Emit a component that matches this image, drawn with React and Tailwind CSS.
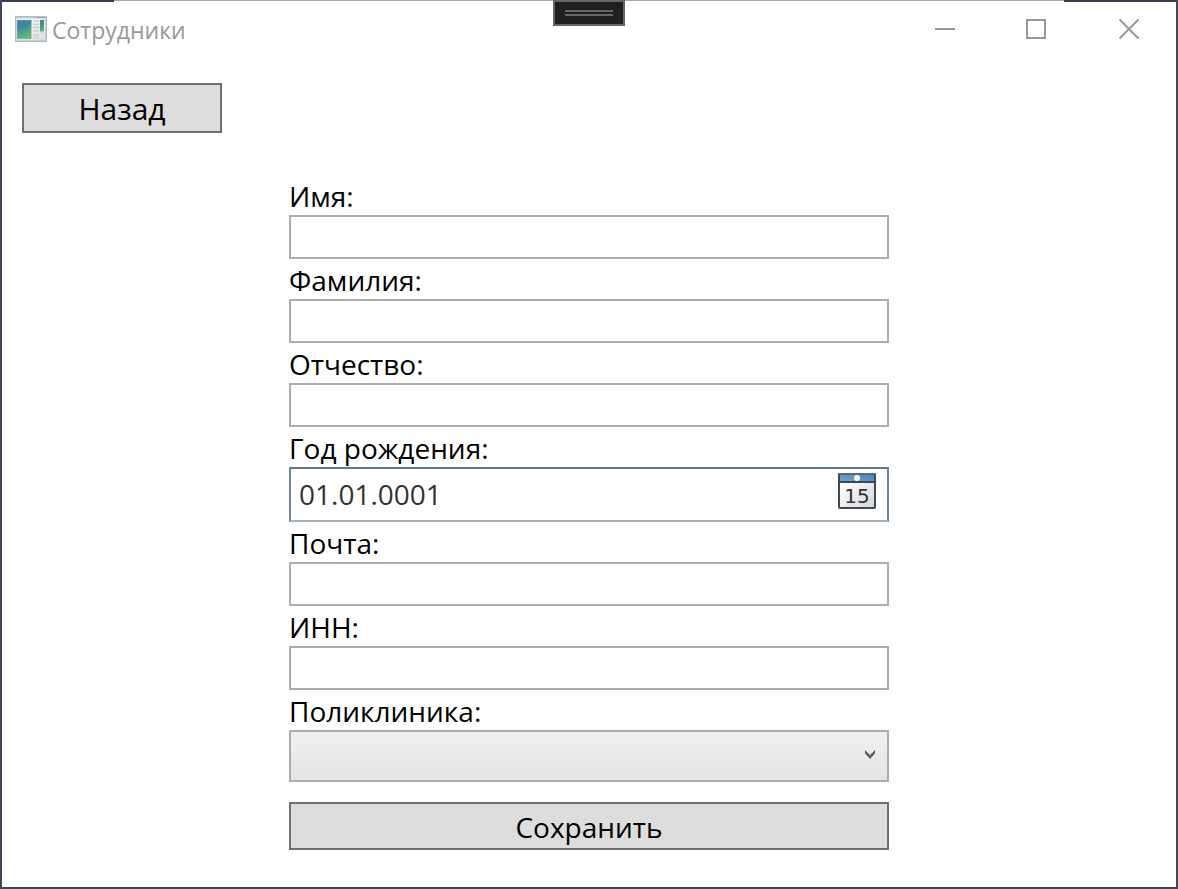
import React from "react";

function AppIcon() {
  return (
    <svg className="h-[26px] w-8 shrink-0" viewBox="0 0 32 26" aria-hidden="true">
      <defs>
        <linearGradient id="pane" x1="0" y1="0" x2="0.3" y2="1">
          <stop offset="0" stopColor="#4384ac" />
          <stop offset="0.45" stopColor="#3f8f98" />
          <stop offset="1" stopColor="#62b878" />
        </linearGradient>
        <linearGradient id="frame" x1="0" y1="0" x2="1" y2="1">
          <stop offset="0" stopColor="#fbfcfd" />
          <stop offset="1" stopColor="#dcdee1" />
        </linearGradient>
      </defs>
      <rect x="0.75" y="0.75" width="30.5" height="24.5" fill="url(#frame)" stroke="#b3b8bd" strokeWidth="1.5" />
      <path d="M1 1.5H31" stroke="#b9c4cf" strokeWidth="1.5" />
      <path d="M21 1.5H30" stroke="#98a5b3" strokeWidth="1" />
      <rect x="2" y="4" width="14.5" height="19" fill="url(#pane)" stroke="#b9d3dc" strokeWidth="0.5" />
      <path d="M2 15Q6 9 16.5 8V4H2Z" fill="#3b7fae" opacity="0.3" />
      <path d="M18 5H24M18 8.5H24M18 11.5H24M18 15H24M18 19H24M18 22H24" stroke="#cdd0d3" strokeWidth="1.5" />
      <rect x="25" y="4" width="4" height="11.5" fill="url(#pane)" />
      <path d="M25 17H29" stroke="#d3d6d8" />
    </svg>
  );
}

function CalendarIcon() {
  return (
    <svg className="h-9 w-[38px]" viewBox="0 0 38 36" aria-hidden="true">
      <defs>
        <linearGradient id="sheet" x1="0" y1="0" x2="1" y2="1">
          <stop offset="0.2" stopColor="#ffffff" />
          <stop offset="1" stopColor="#cfd4da" />
        </linearGradient>
        <linearGradient id="header" x1="0" y1="1" x2="1" y2="0">
          <stop offset="0" stopColor="#70abdb" />
          <stop offset="1" stopColor="#3f83bf" />
        </linearGradient>
      </defs>
      <rect x="1" y="1" width="36" height="34" rx="1" fill="url(#sheet)" stroke="#45474b" strokeWidth="2" />
      <rect x="2" y="1.5" width="34" height="7" fill="url(#header)" />
      <path d="M0 0.75H38" stroke="#6b6562" strokeWidth="1.5" />
      <path d="M1 9H37" stroke="#45474b" strokeWidth="2" />
      <circle cx="19" cy="5" r="3" fill="#fff" />
      <text x="19" y="30" textAnchor="middle" fontFamily="'DejaVu Sans', sans-serif" fontSize="20" fill="#303236">
        15
      </text>
    </svg>
  );
}

function Field({ id, label, children }) {
  return (
    <div>
      <label htmlFor={id} className="block h-10 pt-[3px] text-[28px] leading-9">
        {label}
      </label>
      {children || (
        <input id={id} type="text" className="block h-11 w-full border-2 border-[#abadb3] bg-white px-2 text-[28px] outline-none" />
      )}
    </div>
  );
}

function TitleBar() {
  return (
    <header className="flex h-[54px] items-center text-[#999999]">
      <div className="flex flex-1 items-center gap-1 pl-[13px]">
        <AppIcon />
        <h1 className="pl-px pt-0.5 text-[23px] leading-8">Сотрудники</h1>
      </div>
      <button type="button" aria-label="Свернуть" className="flex h-full w-[92px] items-center justify-center">
        <svg className="size-[22px]" viewBox="0 0 22 22">
          <path d="M2 11H22" stroke="currentColor" strokeWidth="2" />
        </svg>
      </button>
      <button type="button" aria-label="Развернуть" className="flex h-full w-[92px] items-center justify-center">
        <svg className="size-[22px]" viewBox="0 0 22 22">
          <rect x="2" y="2" width="18" height="18" fill="none" stroke="currentColor" strokeWidth="2" />
        </svg>
      </button>
      <button type="button" aria-label="Закрыть" className="flex h-full w-[94px] items-center justify-center">
        <svg className="size-[22px]" viewBox="0 0 22 22">
          <path d="M1.5 1.5L20.5 20.5M20.5 1.5L1.5 20.5" stroke="currentColor" strokeWidth="2" />
        </svg>
      </button>
    </header>
  );
}

export default function App() {
  return (
    <div className="relative flex min-h-screen flex-col border-2 border-t-0 border-[#3d465b] bg-white font-['Open_Sans','Noto_Sans',sans-serif] text-black">
      <div className="flex h-0.5 items-start">
        <div className="h-0.5 w-28 bg-[#373e51]" />
        <div className="h-px flex-1 bg-[#a9a9a9]" />
        <div className="h-0.5 w-28 bg-[#373e51]" />
      </div>
      <button
        type="button"
        aria-label="Панель отладки"
        className="absolute left-1/2 top-0 flex h-[26px] w-[72px] -translate-x-1/2 flex-col items-center justify-center gap-0.5 border-2 border-[#666666] bg-[#1f1f1f]"
      >
        <span className="h-0.5 w-12 bg-[#666666]" />
        <span className="h-0.5 w-12 bg-[#666666]" />
      </button>
      <TitleBar />
      <main className="flex flex-col px-5 pb-9 pt-[27px]">
        <button type="button" className="h-[50px] w-[200px] border-2 border-[#707070] bg-[#dddddd] pt-0.5 text-[30px] leading-9">
          Назад
        </button>
        <form className="mx-auto mt-[42px] w-full max-w-[600px]" onSubmit={(e) => e.preventDefault()}>
          <Field id="first-name" label="Имя:" />
          <Field id="last-name" label="Фамилия:" />
          <Field id="patronymic" label="Отчество:" />
          <Field id="birth" label="Год рождения:">
            <div className="flex h-[55px] items-center border-2 border-b-[#a5b1bc] border-l-[#73879a] border-r-[#73879a] border-t-[#65788b] pr-[11px]">
              <input
                id="birth"
                type="text"
                defaultValue="01.01.0001"
                className="min-w-0 flex-1 bg-transparent pb-0.5 pl-2 text-[28px] leading-9 text-[#333333] outline-none"
              />
              <button type="button" aria-label="Открыть календарь" className="pb-2">
                <CalendarIcon />
              </button>
            </div>
          </Field>
          <Field id="mail" label="Почта:" />
          <Field id="inn" label="ИНН:" />
          <Field id="clinic" label="Поликлиника:">
            <div className="relative">
              <select
                id="clinic"
                className="block h-[52px] w-full appearance-none border-2 border-[#acacac] bg-linear-to-b from-[#f0f0f0] to-[#e5e5e5] px-3 text-[28px] outline-none"
              >
                <option value=""></option>
              </select>
              <svg className="pointer-events-none absolute right-3.5 top-5 h-[9px] w-2.5" viewBox="0 0 10 9" aria-hidden="true">
                <path d="M0 0L5 5L10 0V3.5L5 9L0 3.5Z" fill="#606060" />
              </svg>
            </div>
          </Field>
          <button type="submit" className="mt-5 h-12 w-full border-2 border-[#707070] bg-[#dddddd] pt-0.5 text-[28px] leading-9">
            Сохранить
          </button>
        </form>
      </main>
    </div>
  );
}
